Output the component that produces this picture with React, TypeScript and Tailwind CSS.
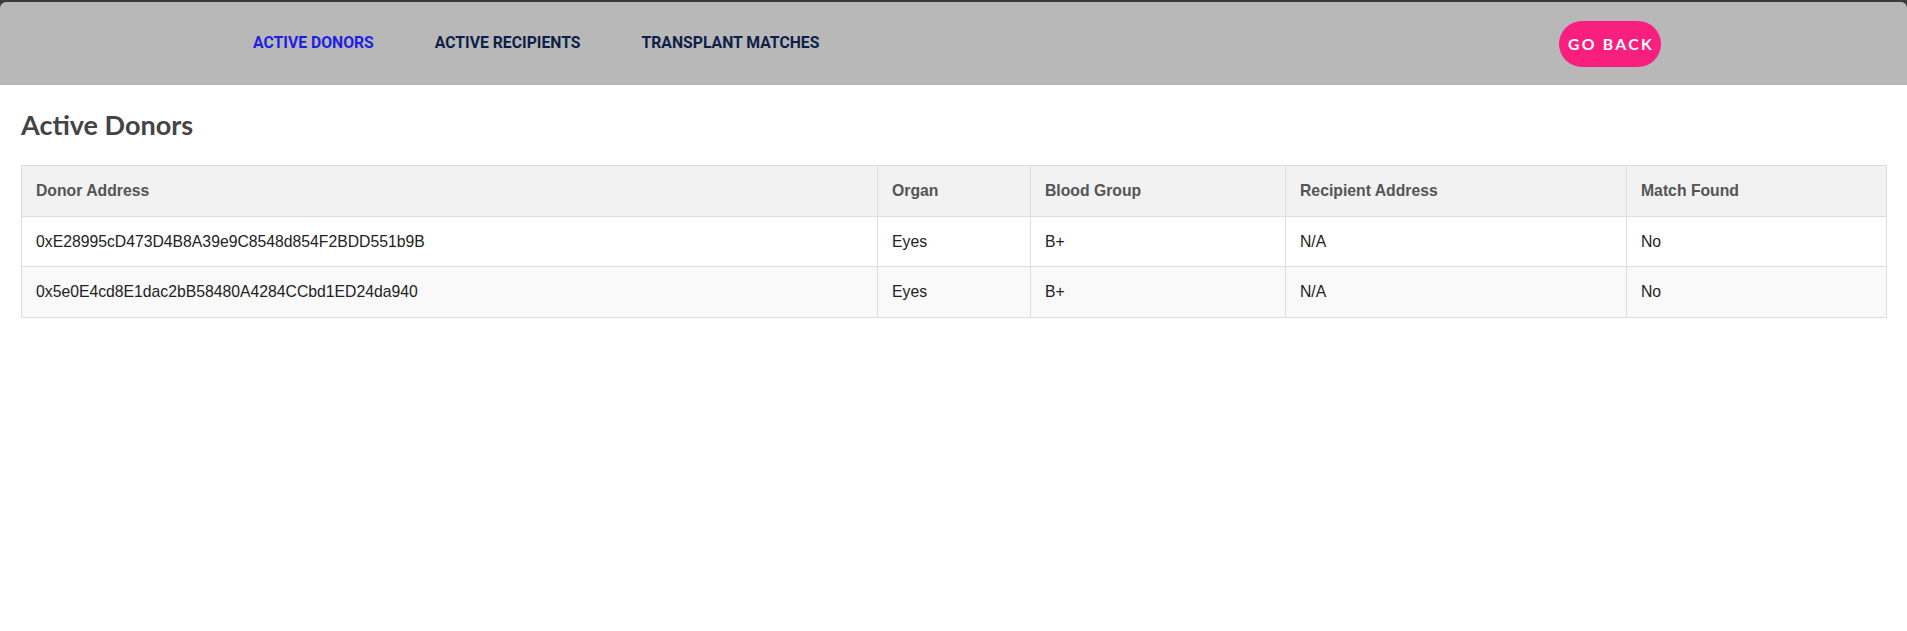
import React from 'react';

type Donor = {
  address: string;
  organ: string;
  bloodGroup: string;
  recipient: string;
  matchFound: string;
};

const donors: Donor[] = [
  {
    address: '0xE28995cD473D4B8A39e9C8548d854F2BDD551b9B',
    organ: 'Eyes',
    bloodGroup: 'B+',
    recipient: 'N/A',
    matchFound: 'No',
  },
  {
    address: '0x5e0E4cd8E1dac2bB58480A4284CCbd1ED24da940',
    organ: 'Eyes',
    bloodGroup: 'B+',
    recipient: 'N/A',
    matchFound: 'No',
  },
];

const headers = ['Donor Address', 'Organ', 'Blood Group', 'Recipient Address', 'Match Found'];

const Navbar: React.FC = () => {
  return (
    <div className="bg-[#3a3a3a] pt-[2px]">
      <nav className="h-[83px] bg-[#b8b8b8] rounded-t-[6px] flex items-center justify-between pl-[253px] pr-[246px] font-['Roboto',sans-serif]">
        <ul className="flex items-center gap-[61px] text-[15.75px] font-bold uppercase -mt-[1px]">
          <li><a href="#" className="text-[#1f1fe3]">Active Donors</a></li>
          <li><a href="#" className="text-[#0e1f47]">Active Recipients</a></li>
          <li><a href="#" className="text-[#0e1f47]">Transplant Matches</a></li>
        </ul>
        <button className="h-[46px] w-[102px] rounded-full bg-[#f81f7f] text-white font-['Lato',sans-serif] font-bold text-[15.75px] tracking-[2.3px] uppercase pl-[2px]">
          Go Back
        </button>
      </nav>
    </div>
  );
};

const App: React.FC = () => {
  return (
    <div className="min-h-screen bg-white">
      <Navbar />
      <main className="px-[21px]">
        <h1 className="mt-[24px] mb-[24px] text-[27px] leading-[1.2] font-bold text-[#444444] font-['Lato',sans-serif]">
          Active Donors
        </h1>
        <table className="w-full table-fixed border-collapse border border-[#dddddd] font-['Liberation_Sans',Arial,sans-serif] text-[15.75px]">
          <colgroup>
            <col className="w-[856px]" />
            <col className="w-[153px]" />
            <col className="w-[255px]" />
            <col className="w-[341px]" />
            <col className="w-[260px]" />
          </colgroup>
          <thead>
            <tr className="bg-[#f2f2f2]">
              {headers.map((h) => (
                <th
                  key={h}
                  className="border border-[#dddddd] px-[14px] py-[15px] leading-[19.5px] text-left font-bold text-[#555555]"
                >
                  {h}
                </th>
              ))}
            </tr>
          </thead>
          <tbody>
            {donors.map((d, i) => (
              <tr key={d.address} className={i % 2 === 1 ? 'bg-[#f9f9f9]' : 'bg-white'}>
                <td className="border border-[#dddddd] px-[14px] py-[15px] leading-[19.5px] text-[#222222]">{d.address}</td>
                <td className="border border-[#dddddd] px-[14px] py-[15px] leading-[19.5px] text-[#222222]">{d.organ}</td>
                <td className="border border-[#dddddd] px-[14px] py-[15px] leading-[19.5px] text-[#222222]">{d.bloodGroup}</td>
                <td className="border border-[#dddddd] px-[14px] py-[15px] leading-[19.5px] text-[#222222]">{d.recipient}</td>
                <td className="border border-[#dddddd] px-[14px] py-[15px] leading-[19.5px] text-[#222222]">{d.matchFound}</td>
              </tr>
            ))}
          </tbody>
        </table>
      </main>
    </div>
  );
};

export default App;
